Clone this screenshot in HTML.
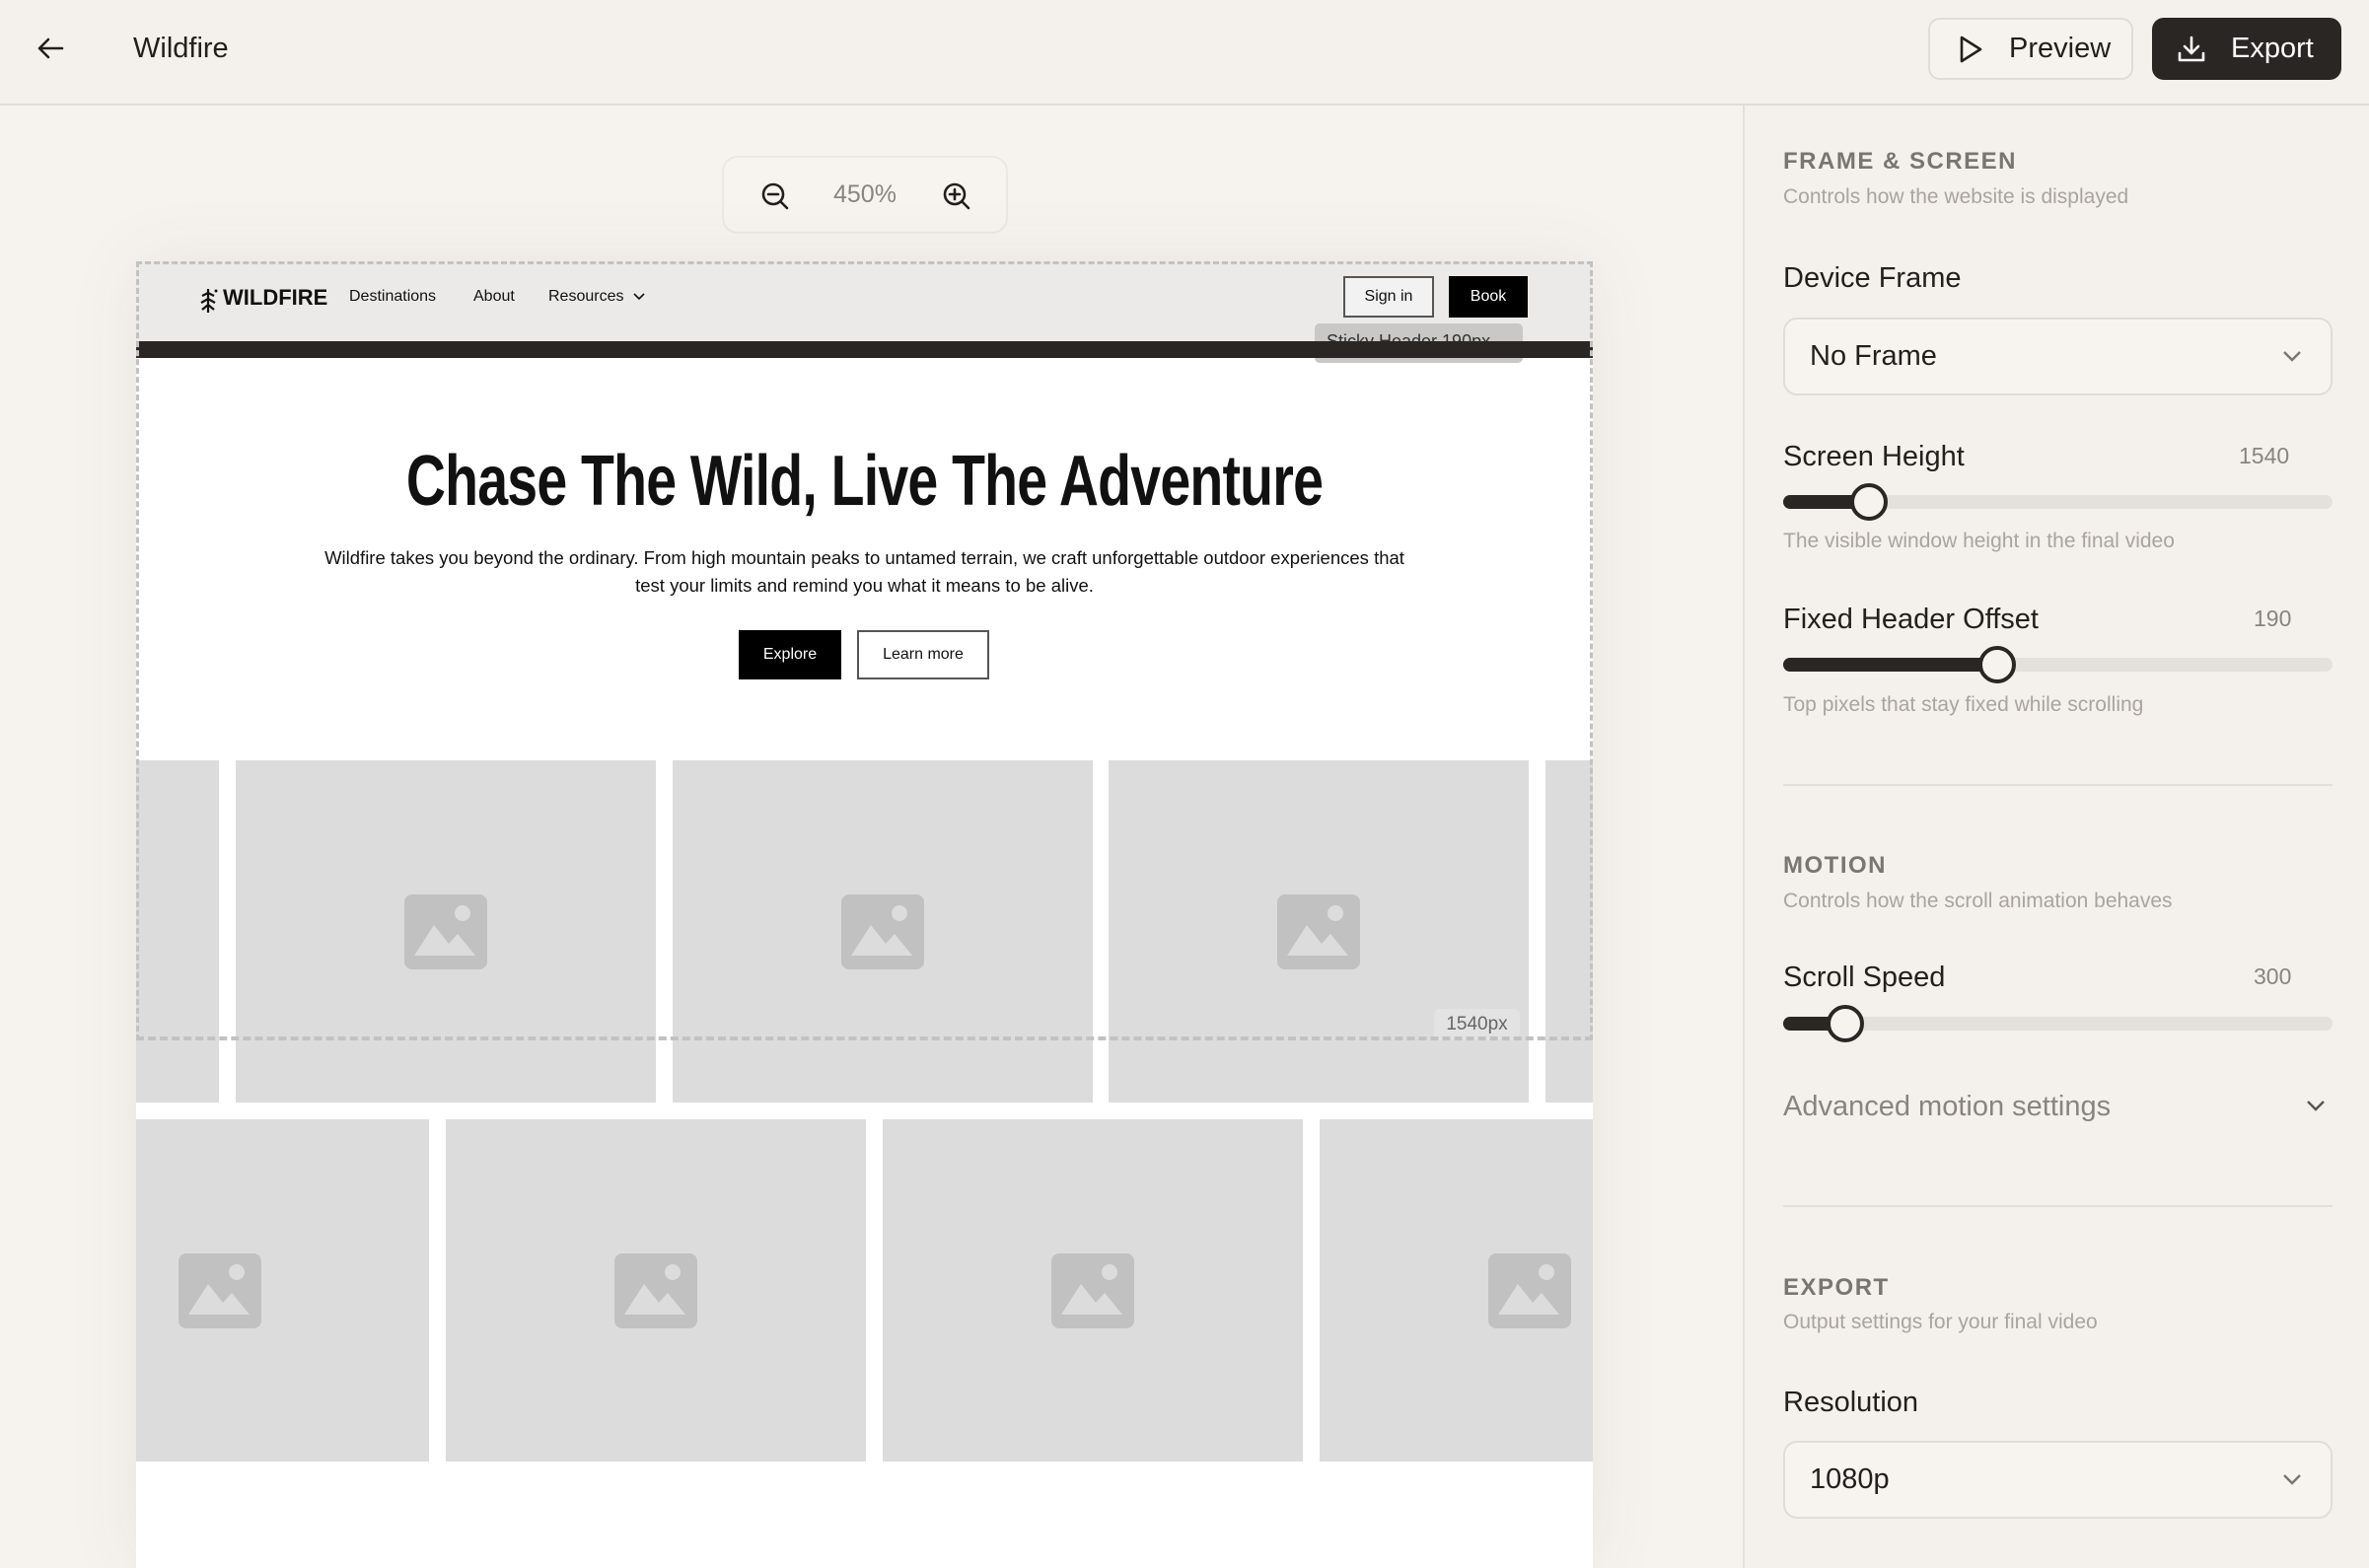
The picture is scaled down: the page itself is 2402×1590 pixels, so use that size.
<!DOCTYPE html>
<html><head><meta charset="utf-8"><style>
*{margin:0;padding:0;box-sizing:border-box}
body{width:2402px;height:1590px;overflow:hidden;background:#f6f3ef;font-family:"Liberation Sans",sans-serif;position:relative;color:#221f1c}
.a{position:absolute}
.top{left:0;top:0;width:2402px;height:107px;background:#f4f0ec;border-bottom:2px solid #e0dcd7}
.btn{border-radius:12px;display:flex;align-items:center;font-size:29px}
.panel{left:1767px;top:107px;width:635px;height:1483px;background:#f4f0ec;border-left:2px solid #e4e0db}
.h{font-size:24px;font-weight:bold;letter-spacing:1.5px;color:#7a7570}
.sub{font-size:21px;color:#aaa49e}
.lbl{font-size:29px;color:#221f1c}
.val{font-size:23px;color:#8a847e}
.track{height:14px;border-radius:7px;background:#e4e1dd;width:557px;left:1808px}
.fill{height:14px;border-radius:7px;background:#2a2624;left:0;top:0}
.thumb{width:38px;height:38px;border-radius:50%;background:#f6f3ef;border:4px solid #2a2624;top:-12px}
.sel{left:1808px;width:557px;height:79px;border:2px solid #e0dcd7;border-radius:14px;background:#f7f4f0;font-size:29px;display:flex;align-items:center;padding-left:25px}
.div{left:1808px;width:557px;height:2px;background:#e2ded9}
.tile{background:#dcdcdc;height:347px}
.ic{width:84px;height:76px;border-radius:8px;background:#c1c1c1;left:50%;top:50%;margin:-38px 0 0 -42px;overflow:hidden}
</style></head><body>
<div class="a top"></div>
<svg class="a" style="left:36px;top:37px" width="30" height="24" viewBox="0 0 30 24"><path d="M27 12H4M13 3L4 12l9 9" fill="none" stroke="#221f1c" stroke-width="2.6" stroke-linecap="round" stroke-linejoin="round"/></svg>
<div class="a" style="left:135px;top:33px;font-size:29px">Wildfire</div>
<div class="a btn" style="left:1955px;top:18px;width:208px;height:63px;border:2px solid #e0dcd7;background:#f6f3ef">
<svg style="margin-left:28px" width="26" height="30" viewBox="0 0 26 30"><path d="M4 3l19 12L4 27z" fill="none" stroke="#221f1c" stroke-width="2.6" stroke-linejoin="round"/></svg>
<span style="margin-left:26px">Preview</span></div>
<div class="a btn" style="left:2182px;top:18px;width:192px;height:63px;background:#2a2624;color:#fff">
<svg style="margin-left:24px" width="32" height="30" viewBox="0 0 32 30"><path d="M16 3v16M9 12l7 7 7-7M4 19v7h24v-7" fill="none" stroke="#fff" stroke-width="2.6" stroke-linecap="round" stroke-linejoin="round"/></svg>
<span style="margin-left:24px">Export</span></div>

<!-- zoom control -->
<div class="a" style="left:732px;top:158px;width:290px;height:79px;border:2px solid #ebe7e2;border-radius:16px;background:#f7f4f0"></div>
<svg class="a" style="left:770px;top:183px" width="32" height="32" viewBox="0 0 32 32"><circle cx="14" cy="14" r="10" fill="none" stroke="#221f1c" stroke-width="2.6"/><path d="M9 14h10M21.5 21.5L28 28" stroke="#221f1c" stroke-width="2.6" stroke-linecap="round"/></svg>
<div class="a" style="left:845px;top:183px;font-size:25px;color:#8a847e">450%</div>
<svg class="a" style="left:954px;top:183px" width="32" height="32" viewBox="0 0 32 32"><circle cx="14" cy="14" r="10" fill="none" stroke="#221f1c" stroke-width="2.6"/><path d="M9 14h10M14 9v10M21.5 21.5L28 28" stroke="#221f1c" stroke-width="2.6" stroke-linecap="round"/></svg>

<!-- preview frame -->
<div class="a" style="left:138px;top:265px;width:1477px;height:1325px;background:#fff;box-shadow:0 0 70px rgba(80,60,40,0.08);overflow:hidden">
 <div class="a" style="left:0;top:0;width:1477px;height:81px;background:#ebeae9"></div>
 <div class="a" style="left:1195px;top:63px;width:211px;height:40px;background:#c9c8c7;border-radius:5px;font-size:18px;color:#333;padding:8px 0 0 12px;overflow:hidden">Sticky Header 190px</div>
 <div class="a" style="left:0;top:81px;width:1477px;height:17px;background:#2a2624"></div>
 <svg class="a" style="left:64px;top:26px" width="20" height="28" viewBox="0 0 20 28"><path d="M9 2v24M3 9l6-3 6 3M2 16l7-4 7 4M3 23l6-5 6 5" fill="none" stroke="#111" stroke-width="2.2"/><circle cx="17" cy="4" r="1.5" fill="#111"/></svg>
 <div class="a" style="left:88px;top:24px;font-size:22px;font-weight:bold;color:#111">WILDFIRE</div>
 <div class="a" style="left:216px;top:27px;font-size:16px;color:#111">Destinations</div>
 <div class="a" style="left:342px;top:27px;font-size:16px;color:#111">About</div>
 <div class="a" style="left:418px;top:27px;font-size:16px;color:#111">Resources</div>
 <svg class="a" style="left:503px;top:30px" width="14" height="12" viewBox="0 0 14 12"><path d="M2 3l5 5 5-5" fill="none" stroke="#111" stroke-width="1.6"/></svg>
 <div class="a" style="left:1224px;top:15px;width:92px;height:42px;border:2px solid #555;background:#f2f2f2;font-size:16px;text-align:center;line-height:38px;color:#111">Sign in</div>
 <div class="a" style="left:1331px;top:15px;width:80px;height:42px;background:#000;font-size:16px;text-align:center;line-height:42px;color:#fff">Book</div>
 <div class="a" style="left:0;top:182px;width:1477px;text-align:center;font-size:72px;font-weight:bold;letter-spacing:-1px;color:#111;transform:scaleX(0.77);transform-origin:center">Chase The Wild, Live The Adventure</div>
 <div class="a" style="left:0;top:287px;width:1477px;text-align:center;font-size:18.5px;line-height:28px;color:#111">Wildfire takes you beyond the ordinary. From high mountain peaks to untamed terrain, we craft unforgettable outdoor experiences that<br>test your limits and remind you what it means to be alive.</div>
 <div class="a" style="left:611px;top:374px;width:104px;height:50px;background:#000;color:#fff;font-size:16px;text-align:center;line-height:50px">Explore</div>
 <div class="a" style="left:731px;top:374px;width:134px;height:50px;border:2px solid #555;color:#111;font-size:16px;text-align:center;line-height:46px">Learn more</div>
 <!-- row1 -->
 <div class="a tile" style="left:0;top:506px;width:84px"></div>
 <div class="a tile" style="left:101px;top:506px;width:426px"><div class="a ic"><svg width="84" height="76"><circle cx="59" cy="19" r="8" fill="#dcdcdc"/><path d="M10 62L30 31 45 50 54 40 72 62Z" fill="#dcdcdc"/></svg></div></div>
 <div class="a tile" style="left:544px;top:506px;width:426px"><div class="a ic"><svg width="84" height="76"><circle cx="59" cy="19" r="8" fill="#dcdcdc"/><path d="M10 62L30 31 45 50 54 40 72 62Z" fill="#dcdcdc"/></svg></div></div>
 <div class="a tile" style="left:986px;top:506px;width:426px"><div class="a ic"><svg width="84" height="76"><circle cx="59" cy="19" r="8" fill="#dcdcdc"/><path d="M10 62L30 31 45 50 54 40 72 62Z" fill="#dcdcdc"/></svg></div></div>
 <div class="a tile" style="left:1429px;top:506px;width:60px"></div>
 <!-- row2 -->
 <div class="a tile" style="left:0;top:870px;width:297px"><div class="a ic" style="left:43px;margin-left:0"><svg width="84" height="76"><circle cx="59" cy="19" r="8" fill="#dcdcdc"/><path d="M10 62L30 31 45 50 54 40 72 62Z" fill="#dcdcdc"/></svg></div></div>
 <div class="a tile" style="left:314px;top:870px;width:426px"><div class="a ic"><svg width="84" height="76"><circle cx="59" cy="19" r="8" fill="#dcdcdc"/><path d="M10 62L30 31 45 50 54 40 72 62Z" fill="#dcdcdc"/></svg></div></div>
 <div class="a tile" style="left:757px;top:870px;width:426px"><div class="a ic"><svg width="84" height="76"><circle cx="59" cy="19" r="8" fill="#dcdcdc"/><path d="M10 62L30 31 45 50 54 40 72 62Z" fill="#dcdcdc"/></svg></div></div>
 <div class="a tile" style="left:1200px;top:870px;width:277px"><div class="a ic" style="left:auto;right:22px;margin-left:0"><svg width="84" height="76"><circle cx="59" cy="19" r="8" fill="#dcdcdc"/><path d="M10 62L30 31 45 50 54 40 72 62Z" fill="#dcdcdc"/></svg></div></div>
 <div class="a" style="left:1316px;top:758px;width:87px;height:32px;background:#e3e3e3;border-radius:6px;font-size:19px;color:#666;text-align:center;line-height:32px">1540px</div>
</div>
<div class="a" style="left:138px;top:265px;width:1477px;height:790px;border:3px dashed #c2c2c2;border-bottom:4px dashed #c2c2c2"></div>

<!-- panel -->
<div class="a panel"></div>
<div class="a h" style="left:1808px;top:150px">FRAME &amp; SCREEN</div>
<div class="a sub" style="left:1808px;top:188px">Controls how the website is displayed</div>
<div class="a lbl" style="left:1808px;top:266px">Device Frame</div>
<div class="a sel" style="top:322px">No Frame<svg class="a" style="right:28px;top:30px" width="22" height="14" viewBox="0 0 22 14"><path d="M3 3l8 8 8-8" fill="none" stroke="#7a7570" stroke-width="2.4"/></svg></div>
<div class="a lbl" style="left:1808px;top:447px">Screen Height</div>
<div class="a val" style="left:2270px;top:449px">1540</div>
<div class="a track" style="top:502px"><div class="a fill" style="width:90px"></div><div class="a thumb" style="left:68px"></div></div>
<div class="a sub" style="left:1808px;top:537px">The visible window height in the final video</div>
<div class="a lbl" style="left:1808px;top:612px">Fixed Header Offset</div>
<div class="a val" style="left:2285px;top:614px">190</div>
<div class="a track" style="top:667px"><div class="a fill" style="width:220px"></div><div class="a thumb" style="left:198px"></div></div>
<div class="a sub" style="left:1808px;top:703px">Top pixels that stay fixed while scrolling</div>
<div class="a div" style="top:795px"></div>
<div class="a h" style="left:1808px;top:864px">MOTION</div>
<div class="a sub" style="left:1808px;top:902px">Controls how the scroll animation behaves</div>
<div class="a lbl" style="left:1808px;top:975px">Scroll Speed</div>
<div class="a val" style="left:2285px;top:977px">300</div>
<div class="a track" style="top:1031px"><div class="a fill" style="width:66px"></div><div class="a thumb" style="left:44px"></div></div>
<div class="a" style="left:1808px;top:1106px;font-size:29px;color:#8a847e">Advanced motion settings</div>
<svg class="a" style="left:2337px;top:1114px" width="22" height="14" viewBox="0 0 22 14"><path d="M3 3l8 8 8-8" fill="none" stroke="#5a5550" stroke-width="2.4"/></svg>
<div class="a div" style="top:1222px"></div>
<div class="a h" style="left:1808px;top:1292px">EXPORT</div>
<div class="a sub" style="left:1808px;top:1329px">Output settings for your final video</div>
<div class="a lbl" style="left:1808px;top:1406px">Resolution</div>
<div class="a sel" style="top:1461px">1080p<svg class="a" style="right:28px;top:30px" width="22" height="14" viewBox="0 0 22 14"><path d="M3 3l8 8 8-8" fill="none" stroke="#7a7570" stroke-width="2.4"/></svg></div>
</body></html>
